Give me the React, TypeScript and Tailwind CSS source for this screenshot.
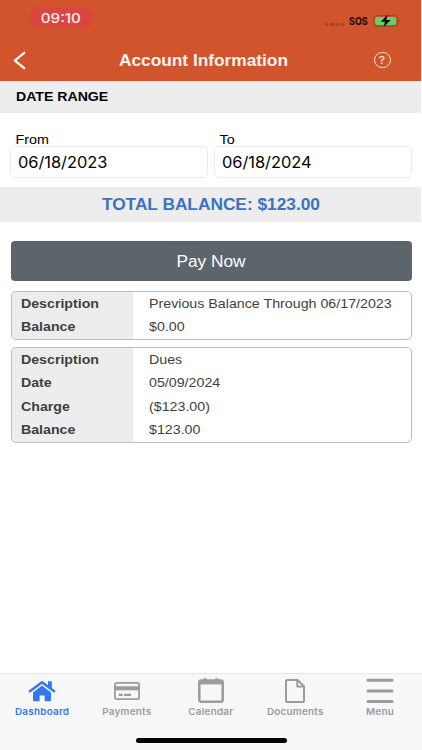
import React from "react";
import clsx from "clsx";

interface Row {
  label: string;
  value: string;
}

const records: Row[][] = [
  [
    { label: "Description", value: "Previous Balance Through 06/17/2023" },
    { label: "Balance", value: "$0.00" },
  ],
  [
    { label: "Description", value: "Dues" },
    { label: "Date", value: "05/09/2024" },
    { label: "Charge", value: "($123.00)" },
    { label: "Balance", value: "$123.00" },
  ],
];

const HomeIcon = () => (
  <svg width="28" height="22" viewBox="0 0 28 22" fill="currentColor">
    <path d="M14 5.6 23 12.6V20.2Q23 21.2 22 21.2H16.6V15.4H11.6V21.2H6Q5 21.2 5 20.2V12.6Z" />
    <path d="M1.9 11.2 14 2.2 26.1 11.2" fill="none" stroke="currentColor" strokeWidth="2.5" strokeLinecap="round" strokeLinejoin="round" />
    <path d="M20 1.2H23.8V9L20 6Z" />
  </svg>
);

const CardIcon = () => (
  <svg width="26" height="18" viewBox="0 0 26 18" fill="none" stroke="currentColor">
    <rect x="0.9" y="0.9" width="24.2" height="16.2" rx="1.8" strokeWidth="1.8" />
    <path d="M1 6.3H25" strokeWidth="4" />
    <path d="M4.7 12.9H8.6M10.2 12.9H17" strokeWidth="2.2" />
  </svg>
);

const CalendarIcon = () => (
  <svg width="26" height="25" viewBox="0 0 26 25" fill="none" stroke="currentColor">
    <rect x="1.3" y="2.4" width="23.4" height="21.4" rx="1.8" strokeWidth="2.5" />
    <path d="M1.4 4.4H24.6" strokeWidth="4" />
    <path d="M7.2 0.2V3M18.8 0.2V3" strokeWidth="3" />
  </svg>
);

const DocumentIcon = () => (
  <svg width="20" height="24" viewBox="0 0 20 24" fill="none" stroke="currentColor" strokeWidth="2" strokeLinejoin="round">
    <path d="M3 1H12.6L19 7.2V21.4Q19 23 17.4 23H2.6Q1 23 1 21.4V2.6Q1 1 2.6 1Z" />
    <path d="M12.3 1.2V7.4H18.8" />
  </svg>
);

const MenuIcon = () => (
  <svg width="28" height="26" viewBox="0 0 28 26" stroke="currentColor" strokeWidth="3" strokeLinecap="round">
    <path d="M2 2.2H26M2 12.9H26M2 23.6H26" />
  </svg>
);

const tabs = [
  { label: "Dashboard", icon: <HomeIcon />, active: true },
  { label: "Payments", icon: <CardIcon /> },
  { label: "Calendar", icon: <CalendarIcon /> },
  { label: "Documents", icon: <DocumentIcon /> },
  { label: "Menu", icon: <MenuIcon /> },
];

const StatusIcons = () => (
  <div className="flex items-center">
    <div className="flex gap-[1.5px] pt-[7px]">
      {[0, 1, 2, 3].map((i) => (
        <span key={i} className="h-[3.5px] w-[3.7px] rounded-full bg-[#a04526]" />
      ))}
    </div>
    <span className="ml-[5px] w-[19px] origin-left scale-x-[0.82] font-[Inter] text-[11px] leading-none font-bold text-[#1a0904]">
      SOS
    </span>
    <svg className="ml-[5px]" width="28" height="14" viewBox="0 0 28 14">
      <rect x="0.8" y="1.6" width="23.8" height="10.6" rx="3" fill="none" stroke="#9c4a22" strokeWidth="1.2" />
      <rect x="2.2" y="2.9" width="21" height="8" rx="1.8" fill="#66cf6d" />
      <path d="M25.8 5.3Q27.6 6.9 25.8 8.5Z" fill="#8a3d20" />
      <path d="M14.6 0.8 7.6 7.7H12L10.6 13 17.8 6.1H13.3Z" fill="#0c0805" />
    </svg>
  </div>
);

const DateField = ({ label, value }: { label: string; value: string }) => (
  <div className="w-[198px]">
    <div className="h-[14px] origin-left scale-x-[1.1] pl-[5px] text-[13px] leading-4 text-black">
      {label}
    </div>
    <div className="flex h-8 items-center rounded-[5px] border border-[#ebebeb] pt-px pl-[7px]">
      <span className="origin-left scale-x-[1.06] font-[Inter] text-[15.5px] tracking-[-0.05px] whitespace-nowrap text-black">
        {value}
      </span>
    </div>
  </div>
);

const RecordCard = ({ rows }: { rows: Row[] }) => (
  <div className="rounded-[5px] border border-[#bdbdbd] bg-[linear-gradient(to_right,#ededed_121px,#ffffff_121px)]">
    {rows.map((row) => (
      <div key={row.label} className="flex h-[23.4px] items-center text-[13px] text-[#3f3f3f]">
        <div className="w-[137px] pl-[9px]">
          <span className="inline-block origin-left scale-x-[1.09] font-bold">{row.label}</span>
        </div>
        <span className="inline-block origin-left scale-x-[1.095] whitespace-nowrap">
          {row.value}
        </span>
      </div>
    ))}
  </div>
);

export default function App() {
  return (
    <div className="flex h-[750px] w-[422px] flex-col overflow-hidden bg-white font-['Liberation_Sans',Arial,sans-serif]">
      <div className="flex w-[421px] flex-1 flex-col">
        <header className="h-[80.5px] bg-[#d1542c]">
          <div className="flex h-10 items-start justify-between pr-[20px] pl-[30px]">
            <div className="mt-[7px] flex h-[21px] w-[62px] items-center justify-center rounded-[8px] bg-[#db4740] pt-px">
              <span className="scale-x-[1.12] font-[Inter] text-[13.5px] font-medium text-[#fff1ec]">
                09:10
              </span>
            </div>
            <div className="mt-[14px]">
              <StatusIcons />
            </div>
          </div>
          <div className="flex h-10 items-center justify-between pr-[30px] pl-[13px]">
            <svg width="14" height="19" viewBox="0 0 14 19" fill="none" stroke="#fff7f3" strokeWidth="2.3" strokeLinecap="round" strokeLinejoin="round">
              <path d="M11.2 1.8 1.8 9.6 11.2 17.2" />
            </svg>
            <h1 className="scale-x-[1.08] pt-[2px] pl-[6px] text-[16px] font-bold text-[#fff3ee]">
              Account Information
            </h1>
            <div className="flex h-4 w-[17.5px] items-center justify-center rounded-full border-[1.2px] border-[#ffe3d8] pt-px">
              <span className="scale-x-[1.1] font-[Inter] text-[11px] leading-none font-medium text-[#ffe3d8]">
                ?
              </span>
            </div>
          </div>
        </header>

        <div className="flex h-[32.5px] items-center bg-[#ededed] pl-[16px]">
          <h2 className="origin-left scale-x-[1.085] text-[13px] font-bold text-black">DATE RANGE</h2>
        </div>

        <div className="flex h-[73.5px] gap-[6px] pt-[19px] pl-[10px]">
          <DateField label="From" value="06/18/2023" />
          <DateField label="To" value="06/18/2024" />
        </div>

        <div className="flex h-[35.5px] items-center justify-center bg-[#ededed] pt-px">
          <span className="scale-x-[1.08] text-[16px] font-bold whitespace-nowrap text-[#3b72c4]">
            TOTAL BALANCE: $123.00
          </span>
        </div>

        <main className="flex flex-1 flex-col gap-[7.6px] pt-[19px] pr-[9.5px] pl-[10.5px]">
          <button className="mb-[2.2px] h-10 rounded-[4px] bg-[#5c646c] pt-px text-white">
            <span className="inline-block scale-x-[1.08] text-[16px]">Pay Now</span>
          </button>
          {records.map((rows, i) => (
            <RecordCard key={i} rows={rows} />
          ))}
        </main>
      </div>

      <nav className="flex h-[77px] flex-col border-t border-[#e6e6e6] bg-[#f7f7f7]">
        <div className="flex">
          {tabs.map((tab) => (
            <div
              key={tab.label}
              className={clsx(
                "flex flex-1 flex-col items-center",
                tab.active ? "text-[#3478f0]" : "text-[#9c9c9c]"
              )}
            >
              <div className="flex h-[33px] items-center">{tab.icon}</div>
              <span className="scale-x-[1.08] font-[Inter] text-[9.2px] leading-[10px] font-semibold tracking-[0.2px]">
                {tab.label}
              </span>
            </div>
          ))}
        </div>
        <div className="mx-auto mt-[21px] h-[4.5px] w-[151px] rounded-full bg-black" />
      </nav>
    </div>
  );
}
